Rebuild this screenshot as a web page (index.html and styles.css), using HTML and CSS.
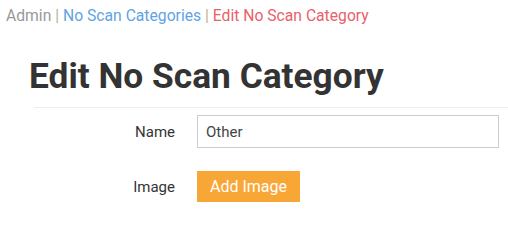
FILE: index.html
```html
<!DOCTYPE html>
<html>
<head>
<meta charset="utf-8">
<link rel="stylesheet" href="styles.css">
</head>
<body>
<nav class="crumbs">
  <span class="crumb-root">Admin</span>
  <span class="sep">|</span>
  <a class="crumb-link" href="#">No Scan Categories</a>
  <span class="sep">|</span>
  <span class="crumb-current">Edit No Scan Category</span>
</nav>
<h1 class="title">Edit No Scan Category</h1>
<div class="rule"></div>
<form class="form">
  <label class="label" for="name">Name</label>
  <input class="input" id="name" type="text" value="Other">
  <span class="label label-image">Image</span>
  <div class="btn-cell"><button type="button" class="btn">Add Image</button></div>
</form>
</body>
</html>
```

FILE: styles.css
```css
* { box-sizing: border-box; }
html, body { margin: 0; padding: 0; background: #fff; }
body {
  font-family: Roboto, "Noto Sans", "Liberation Sans", sans-serif;
  color: #333;
  width: 508px;
  height: 210px;
  overflow: hidden;
}
.crumbs {
  padding: 6px 0 0 6px;
  font-size: 15.7px;
  line-height: 20px;
  white-space: nowrap;
}
.crumb-root { color: #999; }
.sep { color: #bfae92; }
.crumb-link { color: #5fa3e4; text-decoration: none; }
.crumb-current { color: #e8616a; }
.title {
  margin: 29px 0 0 29px;
  font-size: 35.3px;
  line-height: 42px;
  font-weight: 700;
  color: #333;
}
.rule {
  margin: 10px 0 0 34px;
  border-top: 1px solid #eee;
}
.form {
  margin-top: 7px;
  display: grid;
  grid-template-columns: 175px 302px;
  column-gap: 22px;
  row-gap: 23px;
  align-items: center;
}
.label {
  text-align: right;
  font-size: 15px;
  color: #333;
}
.input {
  height: 33px;
  border: 1px solid #ccc;
  padding: 0 8px;
  font-family: inherit;
  font-size: 15px;
  color: #444;
  outline: none;
}
.btn {
  height: 31px;
  padding: 0 13px;
  background: #f8a635;
  color: #fff;
  border: none;
  font-family: inherit;
  font-size: 16px;
  cursor: pointer;
}
.btn-cell { display: flex; }
```
